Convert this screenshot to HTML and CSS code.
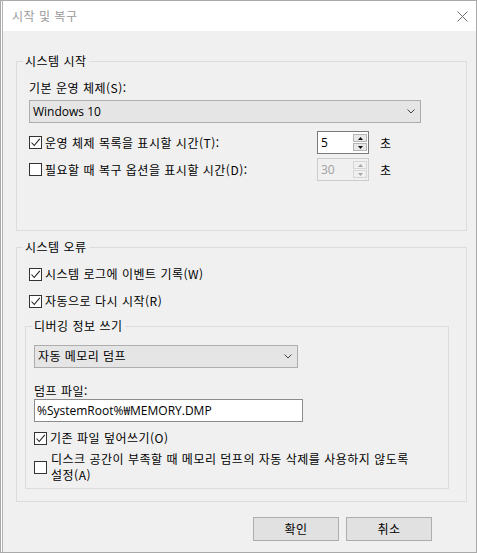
FILE: index.html
```html
<!DOCTYPE html>
<html lang="ko">
<head>
<meta charset="utf-8">
<title>시작 및 복구</title>
<link rel="stylesheet" href="styles.css">
</head>
<body>
<div class="window">
  <div class="frame">
    <div class="titlebar">
      <span class="title">시작 및 복구</span>
      <svg class="close" width="11" height="11" viewBox="0 0 11 11"><path d="M0.5 0.5L10.5 10.5M10.5 0.5L0.5 10.5" stroke="#707070" stroke-width="1" fill="none"/></svg>
    </div>
    <div class="content">
      <fieldset class="group g1">
        <legend>시스템 시작</legend>
        <div class="label">기본 운영 체제(S):</div>
        <div class="select os">
          <span>Windows 10</span>
          <svg class="chev" width="8" height="5" viewBox="0 0 8 5"><path d="M0.5 0.5L4 4L7.5 0.5" stroke="#444" stroke-width="1" fill="none"/></svg>
        </div>
        <div class="timerow first">
          <div class="cb"><span class="box"><svg width="11" height="11" viewBox="0 0 11 11"><path d="M1.5 5.5L4.2 8.5L9.8 1.8" stroke="#222" stroke-width="1.1" fill="none"/></svg></span><span>운영 체제 목록을 표시할 시간(T):</span></div>
          <div class="spin">
            <span class="val">5</span>
            <span class="arrows">
              <span class="arr"><svg width="5" height="3" viewBox="0 0 5 3"><path d="M0 3L2.5 0L5 3Z" fill="#111"/></svg></span>
              <span class="arr"><svg width="5" height="3" viewBox="0 0 5 3"><path d="M0 0L2.5 3L5 0Z" fill="#111"/></svg></span>
            </span>
          </div>
          <span class="unit">초</span>
        </div>
        <div class="timerow second">
          <div class="cb"><span class="box"></span><span>필요할 때 복구 옵션을 표시할 시간(D):</span></div>
          <div class="spin disabled">
            <span class="val">30</span>
            <span class="arrows">
              <span class="arr"><svg width="5" height="3" viewBox="0 0 5 3"><path d="M0 3L2.5 0L5 3Z" fill="#a8a8a8"/></svg></span>
              <span class="arr"><svg width="5" height="3" viewBox="0 0 5 3"><path d="M0 0L2.5 3L5 0Z" fill="#a8a8a8"/></svg></span>
            </span>
          </div>
          <span class="unit">초</span>
        </div>
      </fieldset>

      <fieldset class="group g2">
        <legend>시스템 오류</legend>
        <div class="cb row"><span class="box"><svg width="11" height="11" viewBox="0 0 11 11"><path d="M1.5 5.5L4.2 8.5L9.8 1.8" stroke="#222" stroke-width="1.1" fill="none"/></svg></span><span>시스템 로그에 이벤트 기록(W)</span></div>
        <div class="cb row r2"><span class="box"><svg width="11" height="11" viewBox="0 0 11 11"><path d="M1.5 5.5L4.2 8.5L9.8 1.8" stroke="#222" stroke-width="1.1" fill="none"/></svg></span><span>자동으로 다시 시작(R)</span></div>

        <fieldset class="group g3">
          <legend>디버깅 정보 쓰기</legend>
          <div class="select dump">
            <span>자동 메모리 덤프</span>
            <svg class="chev" width="8" height="5" viewBox="0 0 8 5"><path d="M0.5 0.5L4 4L7.5 0.5" stroke="#444" stroke-width="1" fill="none"/></svg>
          </div>
          <div class="label dumplabel">덤프 파일:</div>
          <div class="input">%SystemRoot%₩MEMORY.DMP</div>
          <div class="cb row r3"><span class="box"><svg width="11" height="11" viewBox="0 0 11 11"><path d="M1.5 5.5L4.2 8.5L9.8 1.8" stroke="#222" stroke-width="1.1" fill="none"/></svg></span><span>기존 파일 덮어쓰기(O)</span></div>
          <div class="cb multi"><span class="box"></span><span class="mtext">디스크 공간이 부족할 때 메모리 덤프의 자동 삭제를 사용하지 않도록<br>설정(A)</span></div>
        </fieldset>
      </fieldset>

      <div class="buttons">
        <div class="btn">확인</div>
        <div class="btn">취소</div>
      </div>
    </div>
  </div>
</div>
</body>
</html>
```
FILE: styles.css
```css
* { box-sizing: border-box; }
html, body { margin: 0; padding: 0; }
body {
  width: 477px;
  height: 553px;
  overflow: hidden;
  background: #fff;
  font-family: "Noto Sans CJK KR", "Noto Sans", sans-serif;
  font-size: 12px;
  letter-spacing: 0.5px;
  color: #000;
}
.window {
  width: 477px;
  height: 553px;
  border: 1px solid #a9a9a9;
  background: #fff;
  display: flex;
}
.frame {
  flex: 1;
  margin-left: 1px;
  border-left: 1px solid #b4b4b4;
  display: flex;
  flex-direction: column;
  min-width: 0;
}
.titlebar {
  height: 30px;
  background: #fff;
  display: flex;
  align-items: center;
  justify-content: space-between;
  padding: 0 8px 0 9px;
}
.title {
  color: #9a9a9a;
  font-size: 12px;
  line-height: 16px;
}
.close { display: block; }
.content {
  flex: 1;
  background: #f0f0f0;
  padding: 22px 9px 0 13px;
  display: flex;
  flex-direction: column;
}
.group {
  margin: 0;
  border: 1px solid #dcdcdc;
  min-width: 0;
  display: flex;
  flex-direction: column;
}
.group legend {
  padding: 0 2px;
  line-height: 16px;
  font-size: 12px;
}
.g1 { padding: 11px 12px 49px 12px; }
.g1 legend { margin-left: -6px; }
.label { line-height: 16px; height: 16px; }
.select {
  height: 23px;
  background: #e5e5e5;
  border: 1px solid #adadad;
  display: flex;
  align-items: center;
  justify-content: space-between;
  padding: 0 5px 0 3px;
  font-family: "Open Sans", "Noto Sans CJK KR", sans-serif;
  line-height: 16px;
}
.select .chev { display: block; }
.os { width: 392px; margin-top: 4px; letter-spacing: 0; }
.timerow {
  display: grid;
  grid-template-columns: 288px 52px auto;
  align-items: center;
  height: 23px;
}
.timerow.first { margin-top: 8px; }
.timerow.second { margin-top: 4px; }
.unit { margin-left: 11px; line-height: 16px; }
.cb {
  display: flex;
  align-items: center;
  gap: 3px;
  line-height: 16px;
  white-space: nowrap;
}
.box {
  width: 13px;
  height: 13px;
  flex: none;
  border: 1px solid #333;
  background: #fff;
  display: flex;
  align-items: center;
  justify-content: center;
}
.box svg { display: block; }
.spin {
  height: 23px;
  border: 1px solid #7a7a7a;
  background: #fff;
  display: flex;
  letter-spacing: 0;
}
.spin .val {
  flex: 1;
  padding-left: 3px;
  line-height: 21px;
  font-family: "Open Sans", "Noto Sans CJK KR", sans-serif;
}
.arrows {
  width: 15px;
  display: flex;
  flex-direction: column;
  gap: 1px;
  padding: 2px 1px 2px 0;
}
.arr {
  flex: 1;
  border: 1px solid #b5b5b5;
  background: #e8e8e8;
  display: flex;
  align-items: center;
  justify-content: center;
}
.arr svg { display: block; }
.spin.disabled { border-color: #cccccc; background: #f0f0f0; color: #a0a0a0; }
.spin.disabled .arr { border-color: #d6d6d6; background: #f0f0f0; }
.g2 { margin-top: 8px; padding: 11px 17px 12px 12px; }
.g2 > legend { margin-left: -6px; }
.row { height: 16px; }
.r2 { margin-top: 11px; }
.g3 { margin: 9px 0 0 -4px; padding: 11px 8px 5px 8px; }
.g3 legend { margin-left: -2px; }
.dump { width: 264px; }
.dumplabel { margin-top: 15px; }
.input {
  width: 269px;
  height: 23px;
  background: #fff;
  border: 1px solid #8c8c8c;
  padding-left: 2px;
  line-height: 21px;
  letter-spacing: 0;
  font-family: "Open Sans", "Noto Sans CJK KR", sans-serif;
}
.r3 { margin-top: 8px; }
.multi { margin-top: 5px; gap: 4px; }
.mtext { line-height: 16px; }
.buttons {
  margin-top: 15px;
  display: flex;
  justify-content: flex-end;
  gap: 7px;
  padding-right: 35px;
}
.btn {
  width: 86px;
  height: 24px;
  background: #e1e1e1;
  border: 1px solid #adadad;
  display: flex;
  align-items: center;
  justify-content: center;
  line-height: 16px;
}
```
